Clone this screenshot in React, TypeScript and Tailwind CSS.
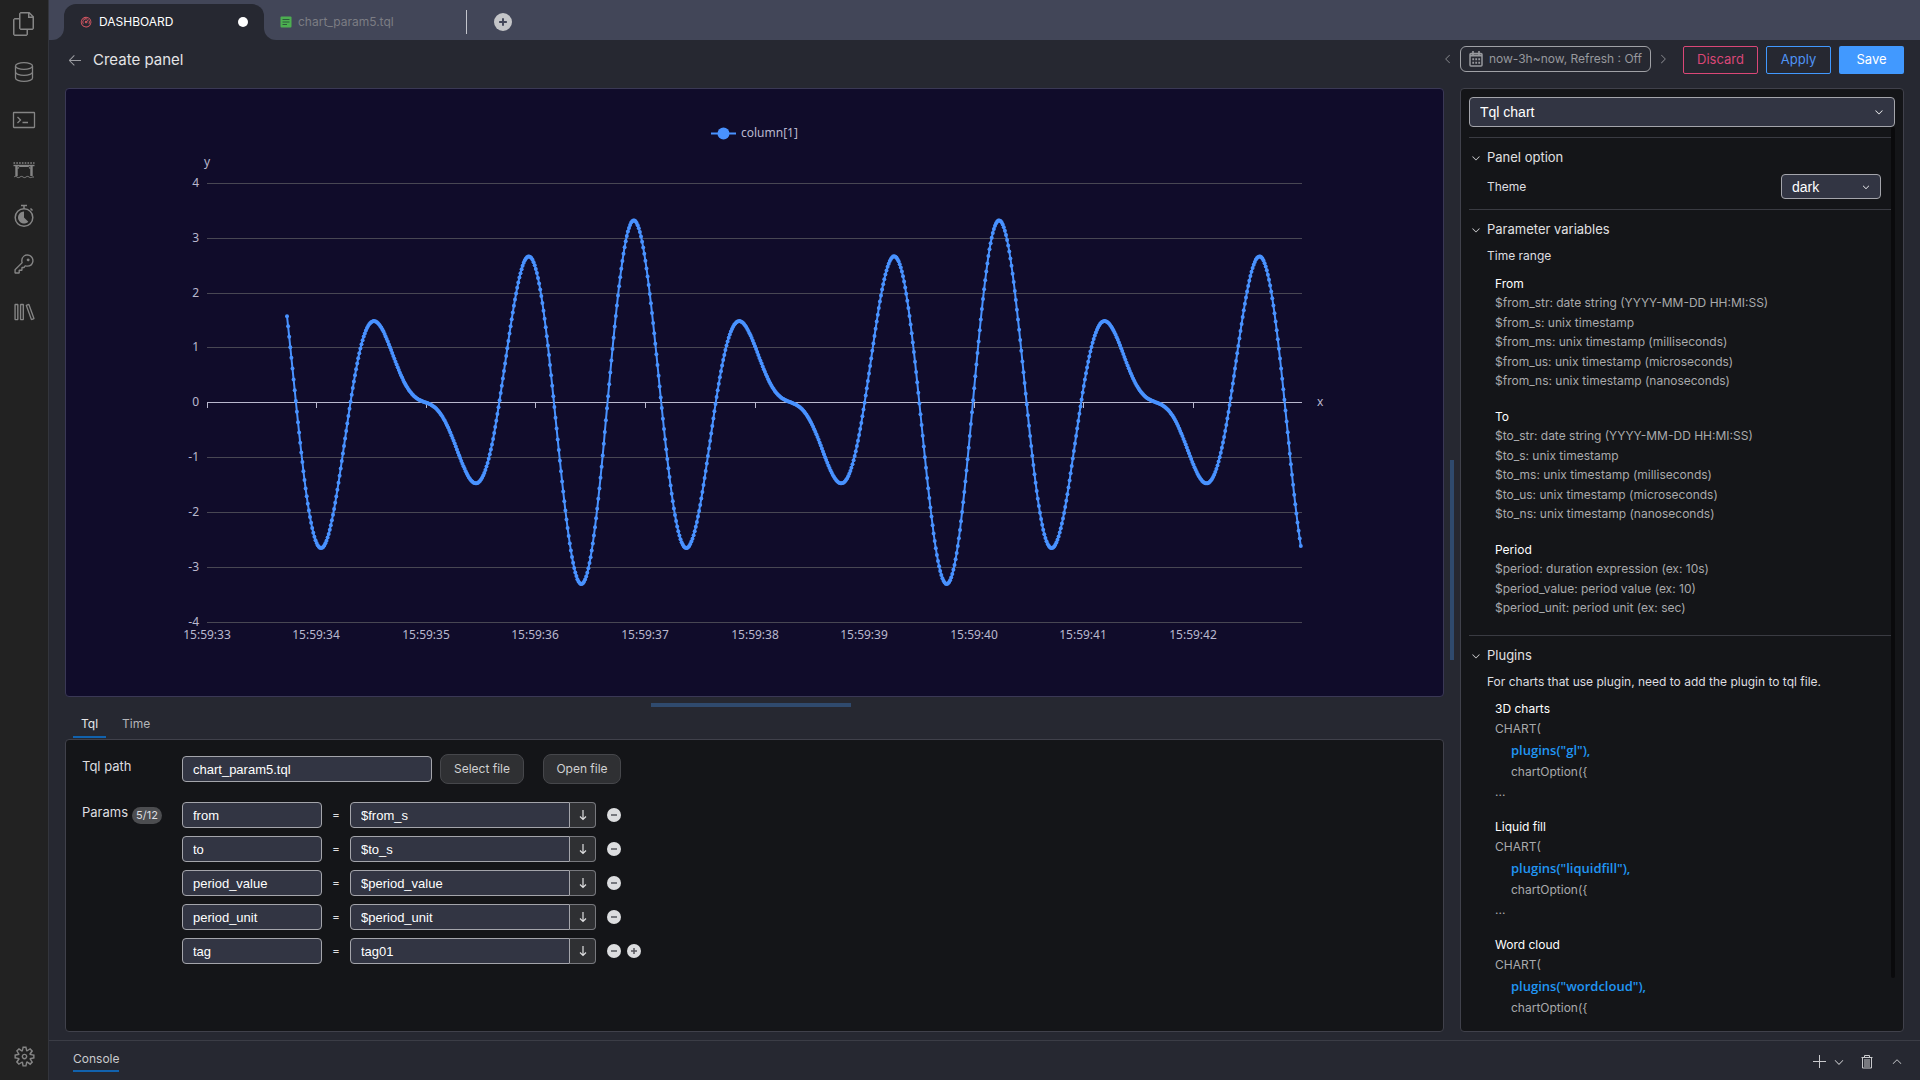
import React, { useState } from 'react';
import {
  VscFiles,
  VscKey,
  VscLibrary,
  VscGear,
  VscDashboard,
  VscArrowLeft,
  VscChevronLeft,
  VscChevronRight,
  VscChevronDown,
  VscChevronUp,
  VscAdd,
} from 'react-icons/vsc';

const DatabaseIcon = () => (
  <svg width="24" height="24" viewBox="0 0 24 24" fill="none" stroke="currentColor" strokeWidth="1.3">
    <ellipse cx="12" cy="6" rx="8.5" ry="3.3" />
    <path d="M3.5 6v12c0 1.800 3.800 3.300 8.500 3.300s8.500-1.500 8.500-3.300V6" />
    <path d="M3.5 12c0 1.800 3.800 3.300 8.500 3.300s8.500-1.500 8.500-3.300" />
  </svg>
);

const TerminalIcon = () => (
  <svg width="24" height="24" viewBox="0 0 24 24" fill="none" stroke="currentColor" strokeWidth="1.3">
    <rect x="1.5" y="4.5" width="21" height="15" rx="0.5" />
    <path d="M5.5 9 8.5 12 5.5 15M10.5 14.5h5.5" />
  </svg>
);

const BridgeIcon = () => (
  <svg width="24" height="24" viewBox="0 0 24 24" fill="none" stroke="currentColor">
    <path d="M1.500 7h21" strokeWidth="1.600" strokeDasharray="1.600 1.200" />
    <path d="M1.500 9.500h21" strokeWidth="1.400" />
    <path d="M4.500 9v11M19.500 9v11" strokeWidth="2.400" />
    <path d="M6 13c0-1.800.8-2.500 2-2.500h8c1.200 0 2 .7 2 2.500" strokeWidth="1" />
    <path d="M2 21c1-.8 2-.8 3 0s2 .8 3 0 2-.8 3 0 2 .8 3 0 2-.8 3 0 2 .8 3 0h2" strokeWidth="1" />
  </svg>
);

const TimerIcon = () => (
  <svg width="24" height="24" viewBox="0 0 24 24" fill="none" stroke="currentColor">
    <circle cx="12" cy="13.500" r="8.800" strokeWidth="1.500" />
    <path d="M9 1.500h6M12 1.500v3M18.500 4.500l2 2" strokeWidth="1.500" />
    <path d="M12 13.500V7.500a6 6 0 1 0 4.300 10.200Z" fill="currentColor" stroke="none" />
  </svg>
);

const CalendarIcon = () => (
  <svg width="14" height="16" viewBox="0 0 14 16" fill="none" stroke="currentColor">
    <rect x="1" y="2.500" width="12" height="12.500" rx="1" strokeWidth="1.500" />
    <path d="M4 0v4M10 0v4" strokeWidth="1.600" />
    <path d="M1 4.500h12" strokeWidth="2" />
    <path d="M3.300 8.200h7.800M3.300 11.700h7.800" strokeWidth="2" strokeDasharray="1.800 1.200" />
  </svg>
);

const FileIcon = () => (
  <svg width="12" height="12" viewBox="0 0 12 12">
    <rect x="0.500" y="0.500" width="11" height="11" rx="1" fill="#4caf50" />
    <path d="M2.500 3.500h7M2.500 6h7M2.500 8.500h4.500" stroke="#2d5a3c" strokeWidth="1" />
  </svg>
);

const TrashIcon = () => (
  <svg width="14" height="16" viewBox="0 0 14 16" fill="none" stroke="currentColor" strokeWidth="1">
    <path d="M1.500 3.500h11M4.500 3.500v-2h5v2M2.500 3.500v10.500h9V3.500M5 5v8M7 5v8M9 5v8" />
  </svg>
);

const DownArrow = () => (
  <svg width="10" height="12" viewBox="0 0 10 12" fill="none" stroke="currentColor" strokeWidth="1.200">
    <path d="M5 1v9.500M2 7.500l3 3 3-3" />
  </svg>
);

function RoundSign({ plus, size, bg, fg }: { plus?: boolean; size: number; bg: string; fg: string }) {
  return (
    <svg width={size} height={size} viewBox="0 0 14 14">
      <circle cx="7" cy="7" r="7" fill={bg} />
      <path d={plus ? 'M4 7h6M7 4v6' : 'M4 7h6'} stroke={fg} strokeWidth="1.500" />
    </svg>
  );
}

const NAV = [
  { label: 'Explorer', icon: <VscFiles size={24} /> },
  { label: 'Database', icon: <DatabaseIcon /> },
  { label: 'Shell', icon: <TerminalIcon /> },
  { label: 'Bridge', icon: <BridgeIcon /> },
  { label: 'Timer', icon: <TimerIcon /> },
  { label: 'Key', icon: <VscKey size={22} /> },
  { label: 'Reference', icon: <VscLibrary size={22} /> },
];

function Sidebar() {
  return (
    <nav className="flex w-12 shrink-0 flex-col bg-[#222222] text-[#858585]">
      {NAV.map((n) => (
        <button key={n.label} aria-label={n.label} className="flex h-12 items-center justify-center">
          {n.icon}
        </button>
      ))}
      <button aria-label="Settings" className="mt-auto flex h-12 items-center justify-center">
        <VscGear size={23} />
      </button>
    </nav>
  );
}

function TabBar() {
  return (
    <div className="flex h-10 shrink-0 items-end bg-[#424658] pl-[15px]">
      <div className="relative flex h-9 w-[200px] items-center rounded-t-xl bg-[#262831] px-4 text-xs text-white">
        <span className="absolute -left-3 bottom-0 h-3 w-3 bg-[#262831]">
          <span className="block h-3 w-3 rounded-br-xl bg-[#424658]" />
        </span>
        <span className="absolute -right-3 bottom-0 h-3 w-3 bg-[#262831]">
          <span className="block h-3 w-3 rounded-bl-xl bg-[#424658]" />
        </span>
        <VscDashboard size={13} className="text-[#e05a66]" />
        <span className="ml-1.5">DASHBOARD</span>
        <span className="ml-auto h-2.5 w-2.5 rounded-full bg-white" />
      </div>
      <div className="flex h-9 w-[202px] items-center px-4 text-xs text-[#7c7d84]">
        <FileIcon />
        <span className="ml-1.5">chart_param5.tql</span>
      </div>
      <span className="mb-1.5 h-6 w-px bg-[#c3c5cc]" />
      <button aria-label="New tab" className="mb-[9px] ml-[27px]">
        <RoundSign plus size={18} bg="#c4c5c8" fg="#424658" />
      </button>
    </div>
  );
}

function Header() {
  return (
    <header className="flex h-12 shrink-0 items-start px-4 pt-1.5">
      <button aria-label="Back" className="flex h-7 w-5 items-center text-[#9a9ba0]">
        <VscArrowLeft size={16} className="ml-0.5" />
      </button>
      <h1 className="ml-2 text-[15px] leading-7 text-[#e4e4e6]">Create panel</h1>
      <div className="ml-auto flex items-start gap-2 text-[13px]">
        <button aria-label="Earlier" className="flex h-[26px] w-4 items-center justify-center text-[#85868b]">
          <VscChevronLeft size={14} />
        </button>
        <button className="-ml-1 flex h-[26px] items-center gap-1.5 rounded-md border border-[#a0a1a6] px-2 text-xs text-[#97989d]">
          <CalendarIcon />
          now-3h~now, Refresh : Off
        </button>
        <button aria-label="Later" className="-ml-1 mr-1 flex h-[26px] w-4 items-center justify-center text-[#85868b]">
          <VscChevronRight size={14} />
        </button>
        <button className="h-7 w-[75px] rounded-xs border border-[#da4777] text-[#da4777]">Discard</button>
        <button className="h-7 w-[65px] rounded-xs border border-[#4199ff] text-[#4f94f5]">Apply</button>
        <button className="h-7 w-[65px] rounded-xs bg-[#4199ff] text-white">Save</button>
      </div>
    </header>
  );
}

const X0 = 141;
const SEC = 109.6;
const Y0 = 313.2;
const UNIT = 54.85;
const wave = (t: number) => {
  const w = 2 * Math.PI * 0.3 * (t - 36.655);
  return 2 * Math.sin(3 * w) + 1.4 * Math.sin(4 * w);
};
const POINTS = Array.from({ length: 926 }, (_, i) => {
  const t = 33.73 + i * 0.01;
  return [X0 + (t - 33) * SEC, Y0 - wave(t) * UNIT];
});
const LINE = POINTS.map(([x, y]) => `${x.toFixed(1)},${y.toFixed(1)}`).join(' ');
const TICKS = [33, 34, 35, 36, 37, 38, 39, 40, 41, 42];
const LEVELS = [4, 3, 2, 1, 0, -1, -2, -3, -4];

function Chart() {
  return (
    <svg
      className="h-full w-full"
      viewBox="0 0 1377 607"
      fontSize="12"
      fill="#b9b8ce"
      fontFamily='"Noto Sans", sans-serif'
      role="img"
      aria-label="column[1] over time"
    >
      <path d="M645 44.500h25" stroke="#4992ff" strokeWidth="2" />
      <circle cx="657.500" cy="44.500" r="6" fill="#4992ff" />
      <text x="675" y="48">column[1]</text>
      <text x="141" y="77" textAnchor="middle">y</text>
      <text x="1251" y="317">x</text>
      {LEVELS.map((v) => {
        const y = Math.round(Y0 - v * UNIT) + 0.5;
        return (
          <g key={v}>
            <path d={`M${X0} ${y}H1236`} stroke={v === 0 ? '#b9b8ce' : '#484753'} />
            <text x="133" y={y + 3} textAnchor="end">{v}</text>
          </g>
        );
      })}
      {TICKS.map((s) => {
        const x = Math.floor(X0 + (s - 33) * SEC);
        return (
          <g key={s}>
            <path d={`M${x + 0.5} 313v6`} stroke="#b9b8ce" />
            <text x={x} y="550" textAnchor="middle">{`15:59:${s}`}</text>
          </g>
        );
      })}
      <polyline points={LINE} fill="none" stroke="#4992ff" strokeWidth="2" strokeLinejoin="bevel" />
      <g fill="#4992ff">
        {POINTS.map(([x, y], i) => (
          <circle key={i} cx={x.toFixed(1)} cy={y.toFixed(1)} r="2" />
        ))}
      </g>
    </svg>
  );
}

const FIELD =
  'h-[26px] border border-[#a4a5ab] bg-[#323543] px-2.5 text-[13px] text-white outline-none [font-family:"Liberation_Sans",Arial,sans-serif]';

const PARAMS = [
  ['from', '$from_s'],
  ['to', '$to_s'],
  ['period_value', '$period_value'],
  ['period_unit', '$period_unit'],
  ['tag', 'tag01'],
];

function QueryEditor() {
  const [path, setPath] = useState('chart_param5.tql');
  const [params, setParams] = useState(PARAMS);
  const edit = (row: number, col: number, value: string) =>
    setParams(params.map((p, i) => (i === row ? p.map((c, j) => (j === col ? value : c)) : p)));
  return (
    <section className="shrink-0">
      <div className="flex h-8 items-end pb-px pl-2 text-xs">
        <button className="border-b-2 border-[#1162ae] px-2 pb-1 leading-4 text-[#e7e7e9]">Tql</button>
        <button className="ml-2 border-b-2 border-transparent px-2 pb-1 leading-4 text-[#b4b5b9]">Time</button>
      </div>
      <div className="h-[293px] rounded border border-[#40414b] bg-[#141518] px-4 pt-3.5 text-[#dedee0]">
        <div className="flex h-[30px] items-center">
          <label htmlFor="tql-path" className="w-[100px] pb-1 text-[13px]">Tql path</label>
          <input id="tql-path" value={path} onChange={(e) => setPath(e.target.value)} className={`${FIELD} w-[250px] rounded`} />
          <button className="ml-2 h-[30px] w-[84px] rounded-lg border border-[#46474b] bg-[#2f3033] text-xs text-[#d0d0d2]">
            Select file
          </button>
          <button className="ml-[19px] h-[30px] w-[78px] rounded-lg border border-[#46474b] bg-[#2f3033] text-xs text-[#d0d0d2]">
            Open file
          </button>
        </div>
        <div className="mt-4 flex pt-0.5">
          <div className="flex h-[22px] w-[100px] items-center gap-1 text-[13px]">
            Params
            <span className="mt-1 rounded-full bg-[#4c4d50] px-1 text-[11px] leading-[17px]">5/12</span>
          </div>
          <div className="flex flex-col gap-2">
            {params.map(([name, value], i) => (
              <div key={i} className="flex items-center">
                <input aria-label={`Parameter ${i + 1} name`} value={name} onChange={(e) => edit(i, 0, e.target.value)} className={`${FIELD} w-[140px] rounded`} />
                <span className="w-7 text-center text-xs">=</span>
                <input aria-label={`Parameter ${i + 1} value`} value={value} onChange={(e) => edit(i, 1, e.target.value)} className={`${FIELD} w-[220px] rounded-l`} />
                <button aria-label="Pick variable" className="flex h-[26px] w-[26px] items-center justify-center rounded-r border border-l-0 border-[#77787d] bg-[#2f3033]">
                  <DownArrow />
                </button>
                <button aria-label="Remove parameter" className="ml-[11px]">
                  <RoundSign size={14} bg="#dcdddf" fg="#55565c" />
                </button>
                {i === params.length - 1 && (
                  <button aria-label="Add parameter" className="ml-1.5">
                    <RoundSign plus size={14} bg="#dcdddf" fg="#55565c" />
                  </button>
                )}
              </div>
            ))}
          </div>
        </div>
      </div>
    </section>
  );
}

const RANGES = [
  {
    title: 'From',
    lines: [
      '$from_str: date string (YYYY-MM-DD HH:MI:SS)',
      '$from_s: unix timestamp',
      '$from_ms: unix timestamp (milliseconds)',
      '$from_us: unix timestamp (microseconds)',
      '$from_ns: unix timestamp (nanoseconds)',
    ],
  },
  {
    title: 'To',
    lines: [
      '$to_str: date string (YYYY-MM-DD HH:MI:SS)',
      '$to_s: unix timestamp',
      '$to_ms: unix timestamp (milliseconds)',
      '$to_us: unix timestamp (microseconds)',
      '$to_ns: unix timestamp (nanoseconds)',
    ],
  },
  {
    title: 'Period',
    lines: [
      '$period: duration expression (ex: 10s)',
      '$period_value: period value (ex: 10)',
      '$period_unit: period unit (ex: sec)',
    ],
  },
];

const PLUGINS = [
  ['3D charts', 'gl'],
  ['Liquid fill', 'liquidfill'],
  ['Word cloud', 'wordcloud'],
];

function SectionTitle({ children }: { children: React.ReactNode }) {
  return (
    <button className="flex h-6 w-full items-center pl-px text-[13px] text-[#e0e0e2]">
      <VscChevronDown size={12} className="mr-[5px]" />
      {children}
    </button>
  );
}

function OptionsPanel() {
  return (
    <aside className="flex w-[444px] shrink-0 flex-col overflow-hidden rounded border border-[#40414b] bg-[#141518] p-2">
      <div className="relative">
        <select
          aria-label="Chart type"
          className='h-[30px] w-full appearance-none rounded border border-[#a4a5ab] bg-[#323543] px-2.5 text-sm text-white [font-family:"Liberation_Sans",Arial,sans-serif]'
        >
          <option>Tql chart</option>
        </select>
        <VscChevronDown size={12} className="pointer-events-none absolute right-2.5 top-[9px] text-white" />
      </div>
      <div className="flex min-h-0 flex-1">
        <div className="min-h-0 flex-1 overflow-hidden text-xs leading-relaxed">
          <hr className="mt-[10px] border-[#3a3b42]" />
          <div className="mt-2">
            <SectionTitle>Panel option</SectionTitle>
            <div className="mt-1 flex h-[25px] items-center justify-between pl-[18px] pr-2.5 text-[#dedee0]">
              <label htmlFor="theme">Theme</label>
              <div className="relative">
                <select
                  id="theme"
                  className='h-[25px] w-[100px] appearance-none rounded border border-[#a4a5ab] bg-[#323543] px-2.5 text-sm leading-none text-white [font-family:"Liberation_Sans",Arial,sans-serif]'
                >
                  <option>dark</option>
                </select>
                <VscChevronDown size={10} className="pointer-events-none absolute right-2.5 top-2 text-white" />
              </div>
            </div>
          </div>
          <hr className="mt-2.5 border-[#3a3b42]" />
          <div className="mt-2">
            <SectionTitle>Parameter variables</SectionTitle>
            <p className="mt-1 pl-[18px] text-[#dedee0]">Time range</p>
            <div className="pl-[26px]">
              {RANGES.map((r) => (
                <div key={r.title} className="mb-4 mt-2 text-[#a9aaac]">
                  <p className="text-white">{r.title}</p>
                  {r.lines.map((l) => (
                    <p key={l}>{l}</p>
                  ))}
                </div>
              ))}
            </div>
          </div>
          <hr className="mt-[17px] border-[#3a3b42]" />
          <div className="mt-2">
            <SectionTitle>Plugins</SectionTitle>
            <p className="mt-1 pl-[18px] text-[#dedee0]">For charts that use plugin, need to add the plugin to tql file.</p>
            <div className="pl-[26px] pt-2 text-[#a9aaac]">
              {PLUGINS.map(([title, name], i) => (
                <div key={name} className="mb-[15px]">
                  <p className="text-white">{title}</p>
                  <p>CHART(</p>
                  <p className='pl-4 text-[13px] font-semibold leading-6 text-[#2196f3] [font-family:"Open_Sans",sans-serif]'>{`plugins("${name}"),`}</p>
                  <p className="pl-4 leading-5">{'chartOption({'}</p>
                  {i < PLUGINS.length - 1 && <p className="leading-5">...</p>}
                </div>
              ))}
            </div>
          </div>
        </div>
        <div className="w-1 shrink-0">
          <div className="h-[95%] rounded-full bg-[#0a0a0c]" />
        </div>
      </div>
    </aside>
  );
}

function ConsoleBar() {
  return (
    <footer className="flex h-10 shrink-0 items-center border-t border-[#3b3d46] pl-6 pr-4 pt-0.5 text-[#c9cacd]">
      <button className="border-b-2 border-[#1162ae] pb-[3px] text-xs leading-4">Console</button>
      <div className="ml-auto flex items-center">
        <button aria-label="New console"><VscAdd size={16} /></button>
        <button aria-label="Console type" className="ml-1"><VscChevronDown size={14} /></button>
        <button aria-label="Delete console" className="ml-3.5"><TrashIcon /></button>
        <button aria-label="Expand console" className="ml-4"><VscChevronUp size={14} /></button>
      </div>
    </footer>
  );
}

export default function App() {
  return (
    <div className="flex h-screen overflow-hidden bg-[#262831] [font-family:Inter,sans-serif]">
      <Sidebar />
      <main className="flex min-w-0 flex-1 flex-col border-l border-[#33353c]">
        <TabBar />
        <Header />
        <div className="flex min-h-0 flex-1 px-4 pb-2">
          <div className="flex min-w-0 flex-1 flex-col">
            <div className="min-h-0 flex-1 overflow-hidden rounded border border-[#3a3855] bg-[#100c2a]">
              <Chart />
            </div>
            <div className="flex h-2.5 shrink-0 items-end justify-center pr-2">
              <span className="h-1 w-[200px] bg-[#2f4a6e]" />
            </div>
            <QueryEditor />
          </div>
          <div className="flex w-4 shrink-0 items-center justify-center">
            <span className="h-[200px] w-1 bg-[#2f4a6e]" />
          </div>
          <OptionsPanel />
        </div>
        <ConsoleBar />
      </main>
    </div>
  );
}
